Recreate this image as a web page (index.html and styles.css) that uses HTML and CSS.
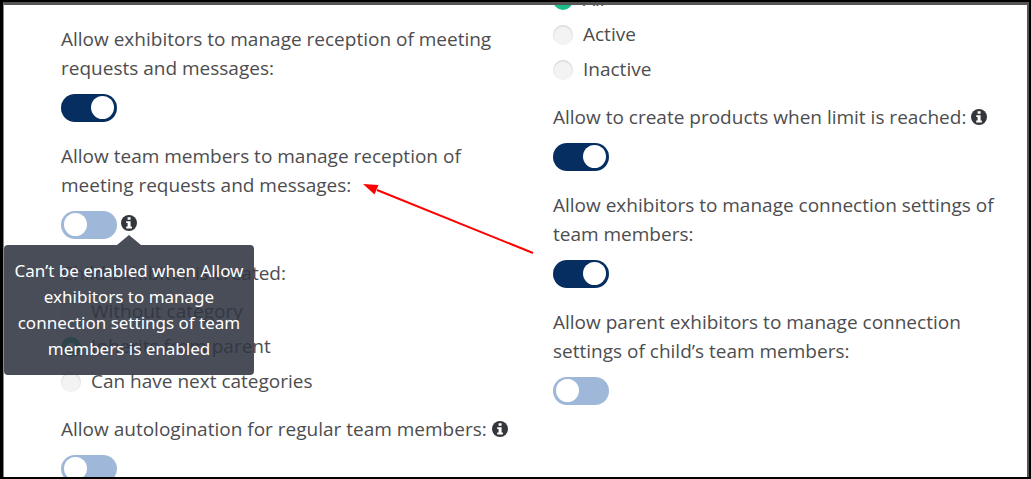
FILE: index.html
```html
<!DOCTYPE html>
<html lang="en">
<head>
    <meta charset="UTF-8">
    <meta name="viewport" content="width=device-width, initial-scale=1.0">
    <title>Exhibitor settings</title>
    <link rel="stylesheet" href="styles.css">
</head>
<body>
    <!-- shared info icon -->
    <svg class="sprite" aria-hidden="true">
        <symbol id="info" viewBox="0 0 16 16">
            <circle cx="8" cy="8" r="8" fill="#33363a"/>
            <path d="M6.600 2.200h3v2.500h-3zM5.200 6.200h4.400v5.200h1.300v2H5.200v-2h1.400V8.100H5.200z" fill="#fff"/>
        </symbol>
    </svg>

    <form class="settings">
        <div class="column">
            <div class="field">
                <label class="title" for="exhibitorReception">Allow exhibitors to manage reception of meeting requests and messages:</label>
                <input type="checkbox" class="toggle" id="exhibitorReception" checked>
            </div>
            <div class="field">
                <label class="title" for="teamReception">Allow team members to manage reception of meeting requests and messages:</label>
                <div class="control">
                    <input type="checkbox" class="toggle" id="teamReception" aria-describedby="teamTip">
                    <span class="hint">
                        <svg class="info"><use href="#info"/></svg>
                        <span class="tooltip" id="teamTip" role="tooltip">Can’t be enabled when Allow exhibitors to manage connection settings of team members is enabled</span>
                    </span>
                </div>
            </div>
            <fieldset class="options">
                <legend class="title">Child Exhibitor is created:</legend>
                <label class="option"><input type="radio" name="category">Without category</label>
                <label class="option"><input type="radio" name="category" checked>Inherits from parent</label>
                <label class="option"><input type="radio" name="category">Can have next categories</label>
            </fieldset>
            <div class="field">
                <label class="title" for="autologin">Allow autologination for regular team members: <svg class="info"><use href="#info"/></svg></label>
                <input type="checkbox" class="toggle" id="autologin">
            </div>
        </div>

        <div class="column scrolled">
            <fieldset class="options">
                <label class="option"><input type="radio" name="status" checked>All</label>
                <label class="option"><input type="radio" name="status">Active</label>
                <label class="option"><input type="radio" name="status">Inactive</label>
            </fieldset>
            <div class="field">
                <label class="title" for="productLimit">Allow to create products when limit is reached: <svg class="info"><use href="#info"/></svg></label>
                <input type="checkbox" class="toggle" id="productLimit" checked>
            </div>
            <div class="field">
                <label class="title" for="connection">Allow exhibitors to manage connection settings of team members:</label>
                <input type="checkbox" class="toggle" id="connection" checked>
            </div>
            <div class="field">
                <label class="title" for="parentConnection">Allow parent exhibitors to manage connection settings of child’s team members:</label>
                <input type="checkbox" class="toggle" id="parentConnection">
            </div>
        </div>

        <svg class="arrow" viewBox="0 0 172 72" aria-hidden="true">
            <path d="M14 6L170 69" stroke="#f00" stroke-width="2"/>
            <path d="M0 0L15.500 1L11.500 10.500Z" fill="#f00"/>
        </svg>
    </form>
</body>
</html>
```
FILE: styles.css
```css
* {
    box-sizing: border-box;
}
body {
    margin: 0;
    height: 100vh;
    overflow: hidden;
    background-color: #fff;
    border: solid #000;
    border-width: 2px 2px 2px 3px;
    font-family: "Open Sans", "Noto Sans", sans-serif;
    font-size: 19px;
    line-height: 29px;
    color: #4d4d4f;
}
.sprite {
    display: none;
}
.settings {
    position: relative;
    display: grid;
    grid-template-columns: 1fr 1fr;
    gap: 30px;
    height: 100%;
    padding: 20px 12px 0 57px;
    overflow: hidden;
    border: solid #555;
    border-width: 3px 2px 0 1px;
    border-left-color: #888;
}
.column {
    display: flex;
    flex-direction: column;
    gap: 20px;
}
/* the first option sits partly above the visible area */
.scrolled {
    margin-top: -43px;
}
.field {
    display: flex;
    flex-direction: column;
    align-items: flex-start;
    gap: 11px;
}
.title {
    padding: 0;
}
.control {
    display: flex;
    gap: 4px;
}
.toggle {
    appearance: none;
    width: 56px;
    height: 28px;
    margin: 0;
    padding: 2px 3px;
    border-radius: 14px;
    background-color: #9fb7d8;
    cursor: pointer;
}
.toggle::before {
    content: "";
    display: block;
    width: 23px;
    height: 23px;
    border-radius: 50%;
    background-color: #fff;
}
.toggle:checked {
    background-color: #062e60;
}
.toggle:checked::before {
    margin-left: auto;
}
.info {
    width: 16px;
    height: 16px;
    vertical-align: -1px;
}
.hint {
    position: relative;
    height: 28px;
    line-height: 24px;
}
.tooltip {
    position: absolute;
    top: 34px;
    left: 50%;
    width: 250px;
    padding: 13px 6px;
    transform: translateX(-50%);
    border-radius: 4px;
    background-color: rgba(48, 52, 65, 0.88);
    color: #fff;
    font-family: "Noto Sans", sans-serif;
    font-size: 17px;
    line-height: 26px;
    text-align: center;
}
.tooltip::before {
    content: "";
    position: absolute;
    bottom: 100%;
    left: 50%;
    margin-left: -12px;
    border: 12px solid transparent;
    border-top: 0;
    border-bottom: 10px solid rgba(48, 52, 65, 0.88);
}
.options {
    margin: 0 0 -4px;
    padding: 0;
    border: 0;
    min-width: 0;
}
.options .title {
    margin-bottom: 6px;
}
.option {
    display: flex;
    align-items: center;
    gap: 10px;
    height: 35px;
}
.option input {
    appearance: none;
    width: 20px;
    height: 20px;
    margin: 0;
    border-radius: 50%;
    background-color: #f3f3f3;
    box-shadow: inset 0 1px 2px rgba(0, 0, 0, 0.15);
}
.option input:checked {
    border: 6px solid #1abc8a;
    background-color: #fff;
    box-shadow: none;
}
.arrow {
    position: absolute;
    top: 179px;
    left: 359px;
    width: 172px;
    height: 72px;
}
```
